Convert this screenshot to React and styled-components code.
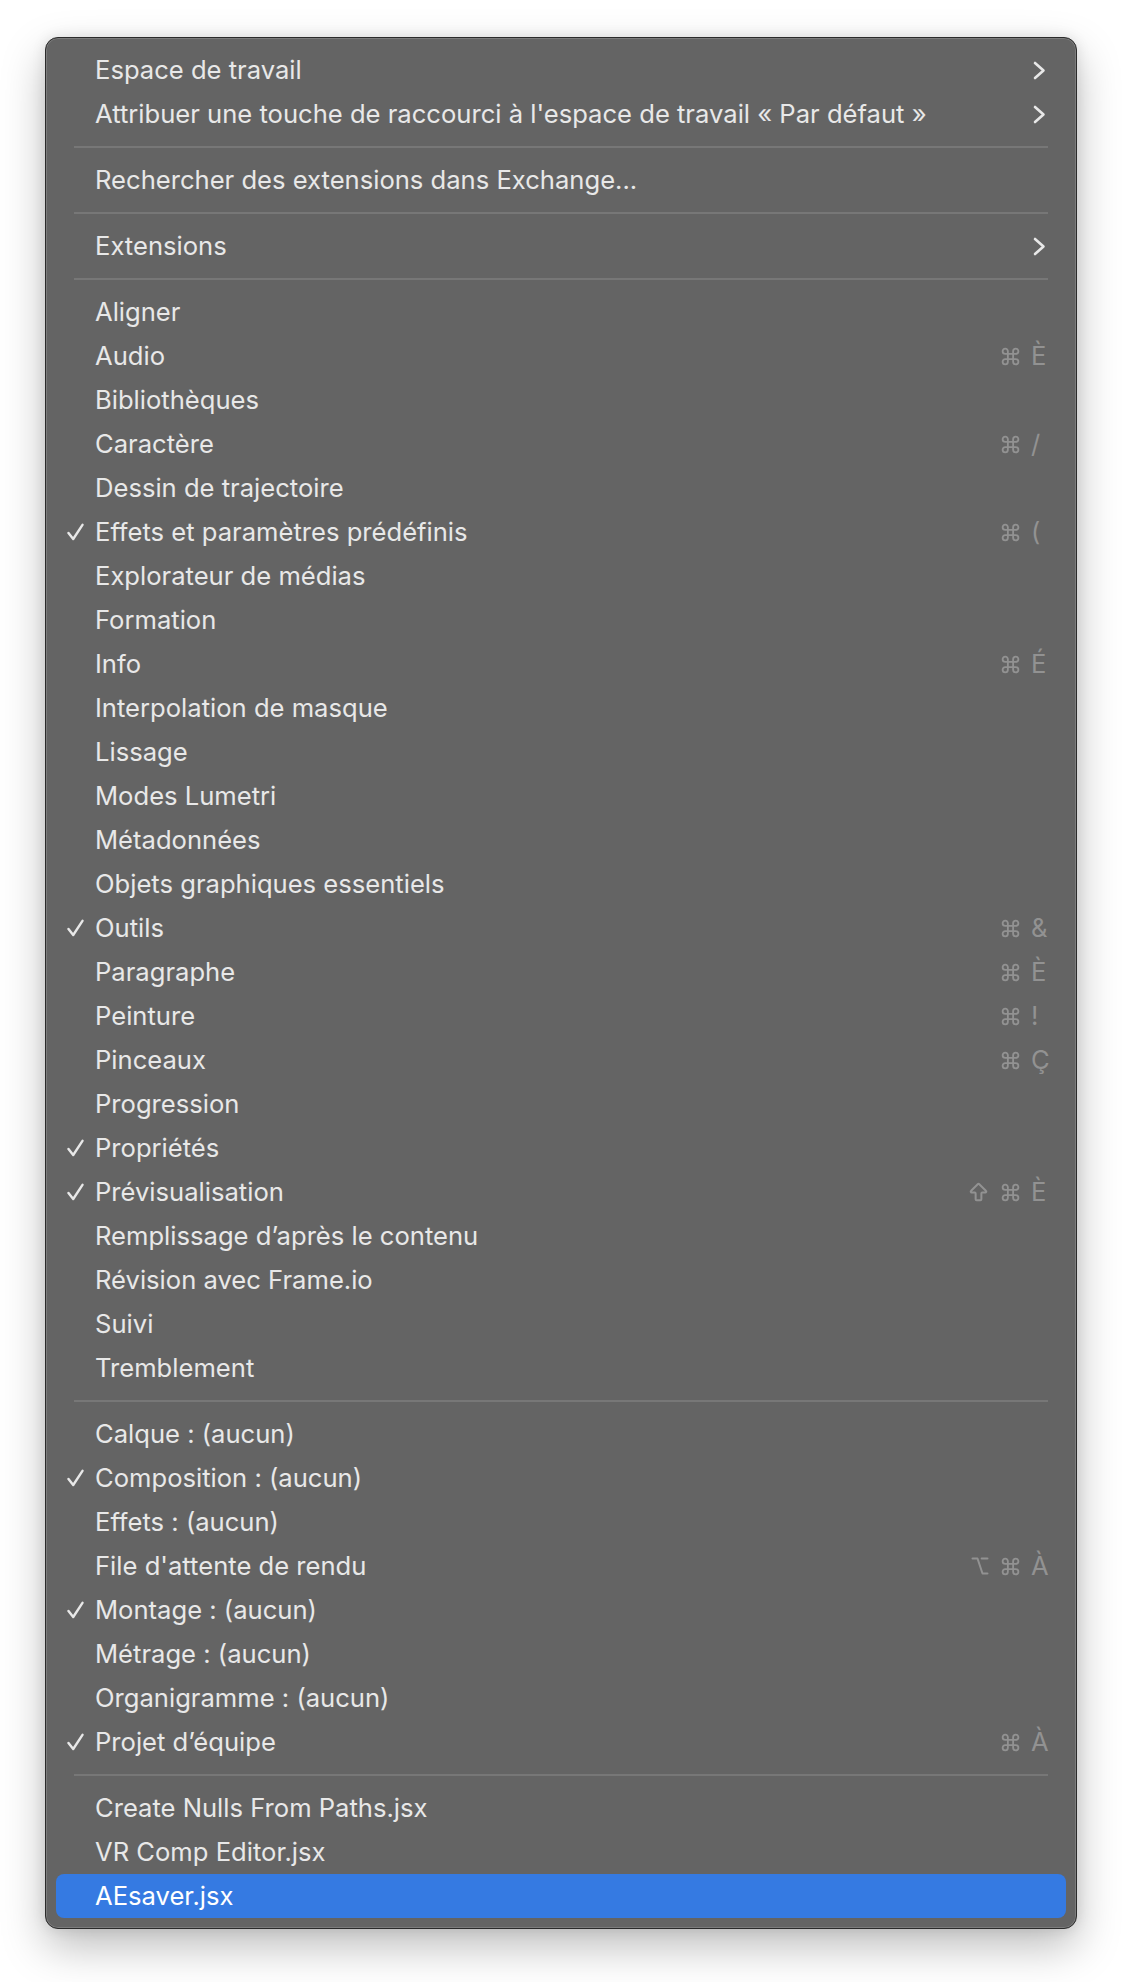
import React from 'react';
import styled, { createGlobalStyle } from 'styled-components';
import { Command, ArrowBigUp, Option } from 'lucide-react';

const GlobalStyle = createGlobalStyle`
  html, body {
    margin: 0;
    background: #ffffff;
  }
  * {
    box-sizing: border-box;
  }
`;

const Page = styled.div`
  padding: 37px 0 60px 45px;
  font-family: Inter, "Noto Sans", "DejaVu Sans", sans-serif;
  -webkit-font-smoothing: antialiased;
`;

const Menu = styled.div`
  width: 1032px;
  padding: 10px;
  background: #646464;
  border: 1px solid #2b2b2b;
  border-radius: 13px;
  box-shadow: inset 0 0 0 1px #7c7c7c, 0 18px 44px rgba(0, 0, 0, 0.26),
    0 0 14px rgba(0, 0, 0, 0.1);
`;

const Row = styled.div`
  display: grid;
  grid-template-columns: 39px 1fr auto;
  align-items: center;
  height: 44px;
  padding-right: 19px;
  border-radius: 8px;
  background: ${(p) => (p.$active ? '#357ae2' : 'transparent')};
  color: ${(p) => (p.$active ? '#ffffff' : '#e8e8e8')};
`;

const CheckSlot = styled.div`
  display: flex;
  align-items: center;
  padding-left: 11px;
  height: 100%;
`;

const Label = styled.span`
  font-size: 25.6px;
  line-height: 1;
  white-space: nowrap;
`;

const Shortcut = styled.div`
  display: flex;
  align-items: center;
  color: #929292;
`;

const Mods = styled.div`
  display: flex;
  align-items: center;
  gap: 10px;
  margin-right: 10px;
`;

const Key = styled.span`
  width: 16px;
  font-size: 25.6px;
  line-height: 1;
`;

const Chevron = styled.svg`
  display: block;
  margin-right: 1px;
`;

const Separator = styled.div`
  height: 2px;
  margin: 10px 18px;
  background: #777777;
`;

const groups = [
  [
    { label: 'Espace de travail', sub: true },
    {
      label: "Attribuer une touche de raccourci à l'espace de travail « Par défaut »",
      sub: true,
    },
  ],
  [{ label: 'Rechercher des extensions dans Exchange...' }],
  [{ label: 'Extensions', sub: true }],
  [
    { label: 'Aligner' },
    { label: 'Audio', mods: ['cmd'], key: 'È' },
    { label: 'Bibliothèques' },
    { label: 'Caractère', mods: ['cmd'], key: '/' },
    { label: 'Dessin de trajectoire' },
    { label: 'Effets et paramètres prédéfinis', checked: true, mods: ['cmd'], key: '(' },
    { label: 'Explorateur de médias' },
    { label: 'Formation' },
    { label: 'Info', mods: ['cmd'], key: 'É' },
    { label: 'Interpolation de masque' },
    { label: 'Lissage' },
    { label: 'Modes Lumetri' },
    { label: 'Métadonnées' },
    { label: 'Objets graphiques essentiels' },
    { label: 'Outils', checked: true, mods: ['cmd'], key: '&' },
    { label: 'Paragraphe', mods: ['cmd'], key: 'È' },
    { label: 'Peinture', mods: ['cmd'], key: '!' },
    { label: 'Pinceaux', mods: ['cmd'], key: 'Ç' },
    { label: 'Progression' },
    { label: 'Propriétés', checked: true },
    { label: 'Prévisualisation', checked: true, mods: ['shift', 'cmd'], key: 'È' },
    { label: 'Remplissage d’après le contenu' },
    { label: 'Révision avec Frame.io' },
    { label: 'Suivi' },
    { label: 'Tremblement' },
  ],
  [
    { label: 'Calque : (aucun)' },
    { label: 'Composition : (aucun)', checked: true },
    { label: 'Effets : (aucun)' },
    { label: "File d'attente de rendu", mods: ['opt', 'cmd'], key: 'À' },
    { label: 'Montage : (aucun)', checked: true },
    { label: 'Métrage : (aucun)' },
    { label: 'Organigramme : (aucun)' },
    { label: 'Projet d’équipe', checked: true, mods: ['cmd'], key: 'À' },
  ],
  [
    { label: 'Create Nulls From Paths.jsx' },
    { label: 'VR Comp Editor.jsx' },
    { label: 'AEsaver.jsx', active: true },
  ],
];

const CheckMark = () => (
  <svg width="17" height="18" viewBox="0 0 17 18">
    <polyline
      points="1.5,10 6.2,16 15.5,1.8"
      fill="none"
      stroke="#e8e8e8"
      strokeWidth="2.4"
      strokeLinecap="round"
      strokeLinejoin="round"
    />
  </svg>
);

const ModIcon = ({ type }) => {
  if (type === 'shift') return <ArrowBigUp size={23} strokeWidth={2.1} />;
  if (type === 'opt') return <Option size={20} strokeWidth={2.4} />;
  return <Command size={21} strokeWidth={2.1} />;
};

const MenuRow = ({ item }) => (
  <Row $active={item.active}>
    <CheckSlot>{item.checked && <CheckMark />}</CheckSlot>
    <Label>{item.label}</Label>
    {item.sub && (
      <Chevron width="13" height="19" viewBox="0 0 13 19">
        <polyline
          points="2,2 10.5,9.5 2,17"
          fill="none"
          stroke="#e8e8e8"
          strokeWidth="2.6"
          strokeLinecap="round"
          strokeLinejoin="round"
        />
      </Chevron>
    )}
    {item.key && (
      <Shortcut>
        <Mods>
          {item.mods.map((m) => (
            <ModIcon key={m} type={m} />
          ))}
        </Mods>
        <Key>{item.key}</Key>
      </Shortcut>
    )}
  </Row>
);

export default function App() {
  return (
    <>
      <GlobalStyle />
      <Page>
        <Menu>
          {groups.map((group, gi) => (
            <React.Fragment key={gi}>
              {gi > 0 && <Separator />}
              {group.map((item) => (
                <MenuRow key={item.label} item={item} />
              ))}
            </React.Fragment>
          ))}
        </Menu>
      </Page>
    </>
  );
}
